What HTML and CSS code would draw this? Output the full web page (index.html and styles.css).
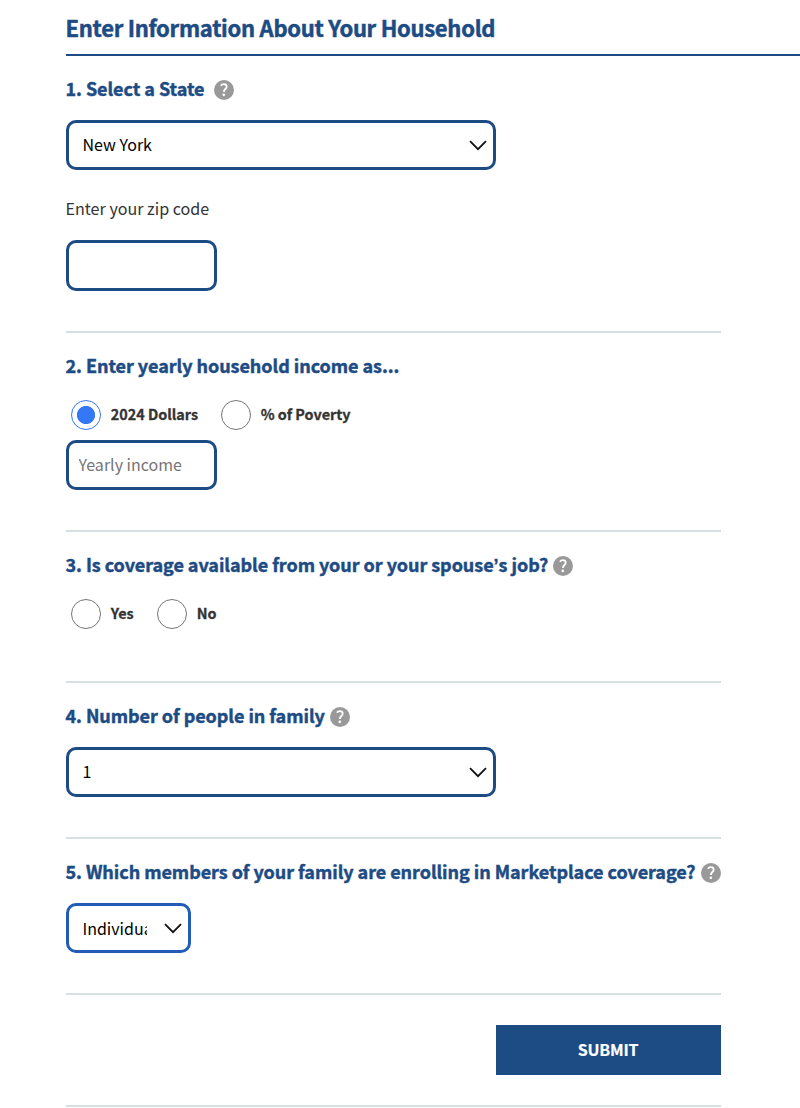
FILE: index.html
```
<!DOCTYPE html>
<html lang="en">
<head>
<meta charset="utf-8">
<title>Household Information</title>
<link rel="stylesheet" href="styles.css">
</head>
<body>
<svg class="sprite" aria-hidden="true">
  <symbol id="help" viewBox="0 0 20 20"><circle cx="10" cy="10" r="10" fill="#999"/><path d="M6.9 5.8C7.6 4.7 8.6 4.2 9.8 4.2c1.7 0 2.9.9 2.9 2.5 0 2.2-3.1 2.6-2.8 5.3" fill="none" stroke="#fff" stroke-width="1.8"/><circle cx="9.8" cy="14.8" r="1.35" fill="#fff"/></symbol>
  <symbol id="chevron" viewBox="0 0 18 11"><path d="M1 1.2l8 8 8-8" fill="none" stroke="#111" stroke-width="1.8"/></symbol>
</svg>
<form class="form">
  <h1 class="title">Enter Information About Your Household</h1>

  <section class="section">
    <h2 class="question question-state"><span class="q-text">1. Select a State</span><svg class="help"><use href="#help"/></svg></h2>
    <div class="select-wrap wide"><select class="field select"><option>New York</option></select><svg class="chevron"><use href="#chevron"/></svg></div>
    <label class="zip-label" for="zip">Enter your zip code</label>
    <input class="field input zip" id="zip" type="text">
  </section>

  <section class="section">
    <h2 class="question"><span class="q-text">2. Enter yearly household income as...</span></h2>
    <div class="radios">
      <label class="radio dollars"><input class="dot" type="radio" name="unit" checked><span class="radio-text">2024 Dollars</span></label>
      <label class="radio"><input class="dot" type="radio" name="unit"><span class="radio-text">% of Poverty</span></label>
    </div>
    <input class="field input income" type="text" placeholder="Yearly income">
  </section>

  <section class="section section-job">
    <h2 class="question"><span class="q-text">3. Is coverage available from your or your spouse<span class="apostrophe">’</span>s job?</span><svg class="help"><use href="#help"/></svg></h2>
    <div class="radios">
      <label class="radio yes"><input class="dot" type="radio" name="job"><span class="radio-text">Yes</span></label>
      <label class="radio"><input class="dot" type="radio" name="job"><span class="radio-text">No</span></label>
    </div>
  </section>

  <section class="section">
    <h2 class="question"><span class="q-text">4. Number of people in family</span><svg class="help"><use href="#help"/></svg></h2>
    <div class="select-wrap wide"><select class="field select"><option>1</option></select><svg class="chevron"><use href="#chevron"/></svg></div>
  </section>

  <section class="section">
    <h2 class="question"><span class="q-text">5. Which members of your family are enrolling in Marketplace coverage?</span><svg class="help"><use href="#help"/></svg></h2>
    <div class="select-wrap narrow"><select class="field select active"><option>Individual</option></select><svg class="chevron"><use href="#chevron"/></svg></div>
  </section>

  <div class="actions"><button class="submit" type="button">SUBMIT</button></div>
</form>
</body>
</html>
```
FILE: styles.css
```
* { box-sizing: border-box; }
body {
  margin: 0;
  background: #fff;
  color: #333;
  font-family: "Noto Sans CJK SC", "Noto Sans CJK JP", sans-serif;
  overflow: hidden;
}
.sprite { display: none; }
.form { padding-left: 66px; }
.title {
  height: 56px;
  margin: 0;
  padding-top: 12px;
  border-bottom: 2px solid #1d4b84;
  color: #1d4b84;
  font-size: 22px;
  letter-spacing: -.28px;
  line-height: 30px;
  white-space: nowrap;
  text-indent: -.5px;
  -webkit-text-stroke: .5px #1d4b84;
}
.section {
  width: 655px;
  padding: 24px 0 40px;
  border-bottom: 2px solid #d6dfe1;
}
.section-job { padding-bottom: 52px; }
.question {
  display: flex;
  align-items: center;
  gap: 5px;
  height: 20px;
  margin: 0 0 20px;
  color: #1d4b84;
  font-size: 18px;
  letter-spacing: -.05px;
  line-height: 20px;
  white-space: nowrap;
}
.question-state { gap: 9.5px; }
.q-text {
  padding-bottom: 4px;
  text-indent: -.5px;
  -webkit-text-stroke: .45px #1d4b84;
}
.apostrophe { font-family: "Liberation Sans", sans-serif; line-height: 1; letter-spacing: 0; }
.help { width: 20px; height: 20px; flex: none; }
.field {
  display: block;
  width: 100%;
  height: 50px;
  margin: 0;
  border: 3px solid #1d4b84;
  border-radius: 10px;
  background: #fff;
  color: #000;
  font: 16px "Noto Sans CJK SC", "Noto Sans CJK JP", sans-serif;
}
.select { appearance: none; padding: 0 40px 2px 13.5px; }
.active { padding-right: 41px; padding-bottom: 0; border-color: #235bb9; }
.select-wrap { position: relative; }
.wide { width: 430px; }
.narrow { width: 125px; }
.chevron {
  position: absolute;
  top: 20px;
  right: 9px;
  width: 18px;
  height: 11px;
  pointer-events: none;
}
.zip-label {
  display: block;
  margin: 28px 0 22px;
  font-size: 16.1px;
  line-height: 20px;
  text-indent: -.5px;
}
.input { width: 151px; padding: 0 10px 2px 9.5px; }
.zip { height: 51px; }
.input::placeholder { color: #757575; opacity: 1; }
.radios { display: flex; height: 30px; margin: 23px 0 10px; padding-left: 5px; }
.section-job .radios { margin-bottom: 0; }
.radio {
  display: flex;
  align-items: center;
  gap: 9.7px;
  font-size: 14.4px;
  font-weight: 700;
  line-height: 20px;
}
.radio-text { padding-bottom: 2px; -webkit-text-stroke: .3px #333; }
.dollars { width: 150px; }
.yes { width: 86px; }
.dot {
  appearance: none;
  flex: none;
  width: 30px;
  height: 30px;
  margin: 0;
  border: 1px solid #767676;
  border-radius: 50%;
  background: #fff;
}
.dot:checked {
  border-color: #3478f6;
  background: radial-gradient(circle, #3478f6 8.7px, #fff 9.4px);
}
.actions {
  display: flex;
  justify-content: flex-end;
  width: 655px;
  padding: 30px 0;
  border-bottom: 2px solid #d6dfe1;
}
.submit {
  width: 225px;
  height: 50px;
  padding: 0 1px 2px 0;
  border: 0;
  background: #1d4b84;
  color: #fff;
  font: 700 16px "Noto Sans CJK SC", "Noto Sans CJK JP", sans-serif;
  letter-spacing: -.2px;
  -webkit-text-stroke: .2px #fff;
}
```
